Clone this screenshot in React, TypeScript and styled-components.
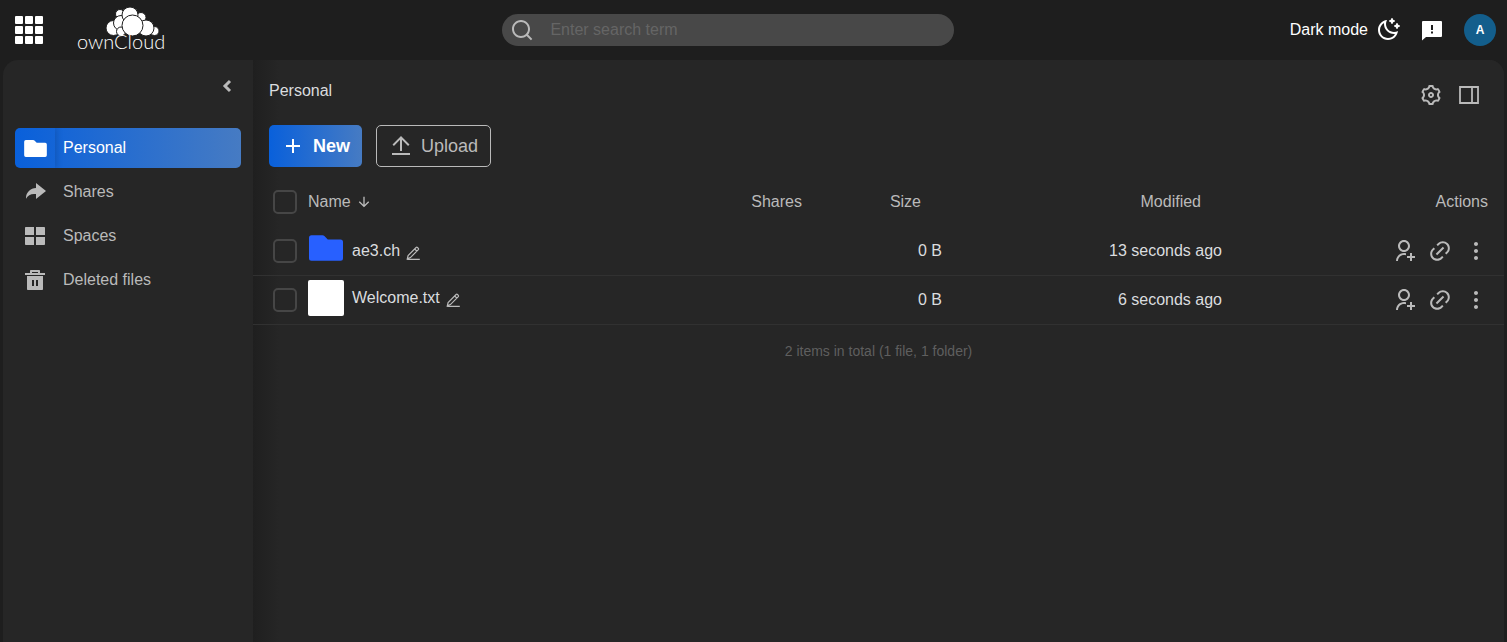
import React from "react";
import styled, { createGlobalStyle, css } from "styled-components";
import {
  RiAddLine,
  RiArrowDownLine,
  RiDeleteBin5Fill,
  RiLayoutGridFill,
  RiLink,
  RiMoonClearLine,
  RiMore2Fill,
  RiSearchLine,
  RiSettings3Line,
  RiShareForwardFill,
  RiUploadLine,
  RiUserAddLine,
} from "react-icons/ri";

const accent = "linear-gradient(90deg, #0960db 0%, #467bc3 100%)";

const GlobalStyle = createGlobalStyle`
  *, *::before, *::after { box-sizing: border-box; }
  html, body, #root { height: 100%; }
  body {
    margin: 0;
    background: #1e1e1e;
    color: #dadcdf;
    font: 16px/24px "Liberation Sans", Arial, sans-serif;
  }
  button {
    font: inherit;
    color: inherit;
    background: none;
    border: 0;
    padding: 0;
    cursor: pointer;
  }
  a { color: inherit; text-decoration: none; }
  svg { display: block; flex: none; }
`;

const Page = styled.div`
  display: flex;
  flex-direction: column;
  min-height: 100%;
`;

const TopBar = styled.header`
  display: grid;
  grid-template-columns: 9fr minmax(200px, 452px) 10fr;
  align-items: center;
  height: 60px;
  padding: 0 11px 0 15px;
`;

const BarStart = styled.div`
  display: flex;
  align-items: center;
  gap: 34px;
`;

const BarEnd = styled.div`
  display: flex;
  align-items: center;
  justify-content: flex-end;
  gap: 20px;
  color: #fff;
`;

const IconButton = styled.button`
  display: flex;
  align-items: center;
  justify-content: center;
  gap: 8px;
`;

const LogoLink = styled.a`
  display: flex;
  flex-direction: column;
  align-items: flex-end;
  padding-bottom: 2px;
  color: #fff;
`;

const Cloud = styled.svg`
  margin-right: 6px;
`;

const Wordmark = styled.span`
  margin-top: -6px;
  font: 300 20px/20px Lato, sans-serif;
`;

const SearchBox = styled.label`
  display: flex;
  align-items: center;
  gap: 16px;
  height: 32px;
  padding: 0 8px;
  border-radius: 16px;
  background: #484848;
  color: #bababa;
`;

const SearchInput = styled.input`
  flex: 1;
  min-width: 0;
  border: 0;
  padding: 0;
  outline: 0;
  background: none;
  color: #dadcdf;
  font: inherit;
  &::placeholder { color: #656565; opacity: 1; }
`;

const Avatar = styled.button`
  width: 32px;
  height: 32px;
  border-radius: 50%;
  background: #135e8c;
  color: #fff;
  font: 700 12px/32px "Liberation Sans", Arial, sans-serif;
`;

const Body = styled.div`
  display: flex;
  flex: 1;
  margin: 0 3px;
  border-radius: 15px 15px 0 0;
  background: #262626;
  overflow: hidden;
`;

const Sidebar = styled.aside`
  flex: none;
  width: 250px;
  padding: 14px 12px;
`;

const CollapseRow = styled.div`
  display: flex;
  justify-content: flex-end;
  align-items: flex-start;
  height: 54px;
  padding: 0 9px;
  color: #bababa;
`;

const NavList = styled.nav`
  display: flex;
  flex-direction: column;
  gap: 4px;
`;

const NavItem = styled.a<{ $active?: boolean }>`
  display: flex;
  align-items: center;
  height: 40px;
  border-radius: 5px;
  color: #bababa;
  overflow: hidden;
  ${(p) => p.$active && css`background: ${accent}; color: #fff;`}
`;

const NavIcon = styled.span<{ $active?: boolean }>`
  display: flex;
  align-items: center;
  justify-content: center;
  width: 40px;
  height: 40px;
  margin-right: 8px;
  ${(p) => p.$active && css`box-shadow: 2px 0 6px rgba(0, 0, 0, 0.14);`}
`;

const Main = styled.main`
  flex: 1;
  min-width: 0;
  background: linear-gradient(90deg, #1f1f1f 0, #262626 26px);
`;

const MainHead = styled.div`
  display: flex;
  justify-content: space-between;
  align-items: flex-start;
  padding: 19px 23px 0 16px;
`;

const Crumb = styled.h1`
  margin: 0;
  font-size: 16px;
  font-weight: 400;
`;

const ViewTools = styled.div`
  display: flex;
  gap: 14px;
  padding-top: 4px;
  color: #bababa;
`;

const Actions = styled.div`
  display: flex;
  gap: 14px;
  padding: 18px 16px 11px;
`;

const ActionButton = styled.button<{ $primary?: boolean }>`
  display: flex;
  align-items: center;
  gap: 8px;
  height: 42px;
  padding: 0 12px;
  border: 1px solid #bababa;
  border-radius: 5px;
  color: #bababa;
  font-size: 18px;
  ${(p) => p.$primary && css`
    border: 0;
    background: ${accent};
    color: #fff;
    font-weight: 700;
  `}
`;

const FileTable = styled.table`
  width: 100%;
  table-layout: fixed;
  border-collapse: separate;
  border-spacing: 0;
`;

const Row = styled.tr<{ $line?: boolean }>`
  height: 49px;
  > * { border-bottom: 1px solid ${(p) => (p.$line ? "#313131" : "transparent")}; }
`;

const cell = css<{ $align?: string }>`
  padding: 0;
  text-align: ${(p) => p.$align || "left"};
  white-space: nowrap;
`;

const HeadCell = styled.th<{ $align?: string; $end?: number }>`
  ${cell}
  color: #bababa;
  font-weight: 400;
  padding-right: ${(p) => p.$end || 0}px;
`;

const Cell = styled.td<{ $align?: string }>`
  ${cell}
`;

const CheckCell = styled(Cell)`
  padding-left: 20px;
`;

const Check = styled.input`
  display: block;
  appearance: none;
  width: 24px;
  height: 24px;
  margin: 0;
  border: 2px solid #464646;
  border-radius: 5px;
`;

const SortButton = styled.button`
  display: flex;
  align-items: center;
  gap: 5px;
`;

const NameBox = styled.div<{ $preview?: boolean }>`
  display: flex;
  align-items: center;
  padding-bottom: ${(p) => (p.$preview ? 4 : 0)}px;
`;

const FolderThumb = styled.span`
  display: flex;
  justify-content: center;
  width: 36px;
  padding-bottom: 6px;
`;

const Thumb = styled.span`
  width: 36px;
  height: 36px;
  border-radius: 2px;
  background: #fff;
`;

const FileLink = styled.a`
  margin: 0 6px 0 8px;
`;

const EditButton = styled(IconButton)`
  padding-top: 6px;
  color: #bababa;
`;

const RowActions = styled.div`
  display: flex;
  justify-content: flex-end;
  gap: 12px;
  padding-right: 16px;
  color: #bababa;
`;

const Summary = styled.p`
  margin: 0;
  padding-top: 14px;
  text-align: center;
  color: #5f5f5f;
  font-size: 14px;
`;

const AppsIcon = () => (
  <svg width="28" height="28" viewBox="0 0 28 28" fill="#fff" aria-hidden="true">
    {[0, 10, 20].map((y) =>
      [0, 10, 20].map((x) => <rect key={`${x}-${y}`} x={x} y={y} width="8" height="8" rx="1" />)
    )}
  </svg>
);

const CloudMark = () => (
  <Cloud width="54" height="30" viewBox="0 0 54 30" fill="#fff" stroke="#1e1e1e" aria-hidden="true">
    <circle cx="15" cy="7" r="4.500" />
    <circle cx="36" cy="10.500" r="5" />
    <circle cx="8.500" cy="21" r="7.500" />
    <circle cx="16" cy="16" r="7.500" />
    <circle cx="25" cy="8" r="8" />
    <circle cx="16" cy="24.500" r="4.500" />
    <circle cx="49.500" cy="24" r="4.500" />
    <circle cx="41" cy="21" r="8" />
    <circle cx="27.500" cy="18.500" r="10.500" />
  </Cloud>
);

const ChevronLeft = () => (
  <svg width="10" height="24" viewBox="0 0 10 24" fill="none" stroke="currentColor" strokeWidth="3" aria-hidden="true">
    <path d="M8 7 3 12 8 17" />
  </svg>
);

const FolderIcon = ({ size, color = "currentColor" }: { size: number; color?: string }) => (
  <svg width={size} height={Math.round(size * 0.75)} viewBox="0 0 34 25.500" fill={color} aria-hidden="true">
    <path d="M2.500 0H13.500C14.300 0 14.900.3 15.400.8L18.800 4.200H31.500A2.500 2.500 0 0 1 34 6.700V23A2.500 2.500 0 0 1 31.500 25.500H2.500A2.500 2.500 0 0 1 0 23V2.500A2.500 2.500 0 0 1 2.500 0Z" />
  </svg>
);

const NavFolder = () => <FolderIcon size={23} />;

const PencilIcon = () => (
  <svg width="16" height="16" viewBox="0 0 16 16" fill="none" stroke="currentColor" strokeWidth="1.200" aria-hidden="true">
    <path d="M1.300 12.800 2.100 9.500 10.100 1.500Q10.800.9 11.500 1.500L12.300 2.300Q12.900 3 12.300 3.700L4.400 11.600ZM8.700 3 10.900 5.200M1.300 13.300H13.800" />
  </svg>
);

const PanelIcon = () => (
  <svg width="24" height="24" viewBox="0 0 24 24" fill="none" stroke="currentColor" strokeWidth="1.800" aria-hidden="true">
    <path d="M3 4H21V20H3ZM15 4V20" />
  </svg>
);

const FeedbackIcon = () => (
  <svg width="24" height="24" viewBox="0 0 24 24" fill="currentColor" fillRule="evenodd" aria-hidden="true">
    <path d="M3 3H21Q22 3 22 4V18Q22 19 21 19H6L2 22.500V4Q2 3 3 3ZM11 7V12H13V7ZM11 13.500V15.500H13V13.500Z" />
  </svg>
);

const nav = [
  { label: "Personal", Icon: NavFolder, active: true },
  { label: "Shares", Icon: RiShareForwardFill },
  { label: "Spaces", Icon: RiLayoutGridFill },
  { label: "Deleted files", Icon: RiDeleteBin5Fill },
];

const files = [
  { name: "ae3.ch", folder: true, size: "0 B", modified: "13 seconds ago" },
  { name: "Welcome.txt", folder: false, size: "0 B", modified: "6 seconds ago" },
];

export default function App() {
  return (
    <Page>
      <GlobalStyle />
      <TopBar>
        <BarStart>
          <IconButton aria-label="Applications"><AppsIcon /></IconButton>
          <LogoLink href="#">
            <CloudMark />
            <Wordmark>ownCloud</Wordmark>
          </LogoLink>
        </BarStart>
        <SearchBox>
          <RiSearchLine size={24} />
          <SearchInput type="search" aria-label="Search" placeholder="Enter search term" />
        </SearchBox>
        <BarEnd>
          <IconButton>Dark mode<RiMoonClearLine size={24} /></IconButton>
          <IconButton aria-label="Feedback"><FeedbackIcon /></IconButton>
          <Avatar aria-label="Account">A</Avatar>
        </BarEnd>
      </TopBar>
      <Body>
        <Sidebar>
          <CollapseRow>
            <IconButton aria-label="Collapse sidebar"><ChevronLeft /></IconButton>
          </CollapseRow>
          <NavList>
            {nav.map(({ label, Icon, active }) => (
              <NavItem key={label} href="#" $active={active}>
                <NavIcon $active={active}><Icon size={24} /></NavIcon>
                {label}
              </NavItem>
            ))}
          </NavList>
        </Sidebar>
        <Main>
          <MainHead>
            <Crumb>Personal</Crumb>
            <ViewTools>
              <IconButton aria-label="View settings"><RiSettings3Line size={24} /></IconButton>
              <IconButton aria-label="Toggle details panel"><PanelIcon /></IconButton>
            </ViewTools>
          </MainHead>
          <Actions>
            <ActionButton $primary><RiAddLine size={24} />New</ActionButton>
            <ActionButton><RiUploadLine size={24} />Upload</ActionButton>
          </Actions>
          <FileTable>
            <colgroup>
              <col style={{ width: 55 }} />
              <col />
              <col style={{ width: 120 }} />
              <col style={{ width: 140 }} />
              <col style={{ width: 280 }} />
              <col style={{ width: 282 }} />
            </colgroup>
            <thead>
              <Row>
                <CheckCell as="th"><Check type="checkbox" aria-label="Select all" /></CheckCell>
                <HeadCell><SortButton>Name<RiArrowDownLine size={16} /></SortButton></HeadCell>
                <HeadCell $align="right">Shares</HeadCell>
                <HeadCell $align="right" $end={21}>Size</HeadCell>
                <HeadCell $align="right" $end={21}>Modified</HeadCell>
                <HeadCell $align="right" $end={16}>Actions</HeadCell>
              </Row>
            </thead>
            <tbody>
              {files.map((f) => (
                <Row key={f.name} $line>
                  <CheckCell><Check type="checkbox" aria-label={`Select ${f.name}`} /></CheckCell>
                  <Cell>
                    <NameBox $preview={!f.folder}>
                      {f.folder ? <FolderThumb><FolderIcon size={34} color="#2860ff" /></FolderThumb> : <Thumb />}
                      <FileLink href="#">{f.name}</FileLink>
                      <EditButton aria-label={`Rename ${f.name}`}><PencilIcon /></EditButton>
                    </NameBox>
                  </Cell>
                  <Cell />
                  <Cell $align="right">{f.size}</Cell>
                  <Cell $align="right">{f.modified}</Cell>
                  <Cell>
                    <RowActions>
                      <IconButton aria-label="Add people"><RiUserAddLine size={24} /></IconButton>
                      <IconButton aria-label="Copy link"><RiLink size={24} /></IconButton>
                      <IconButton aria-label="More actions"><RiMore2Fill size={24} /></IconButton>
                    </RowActions>
                  </Cell>
                </Row>
              ))}
            </tbody>
          </FileTable>
          <Summary>2 items in total (1 file, 1 folder)</Summary>
        </Main>
      </Body>
    </Page>
  );
}
